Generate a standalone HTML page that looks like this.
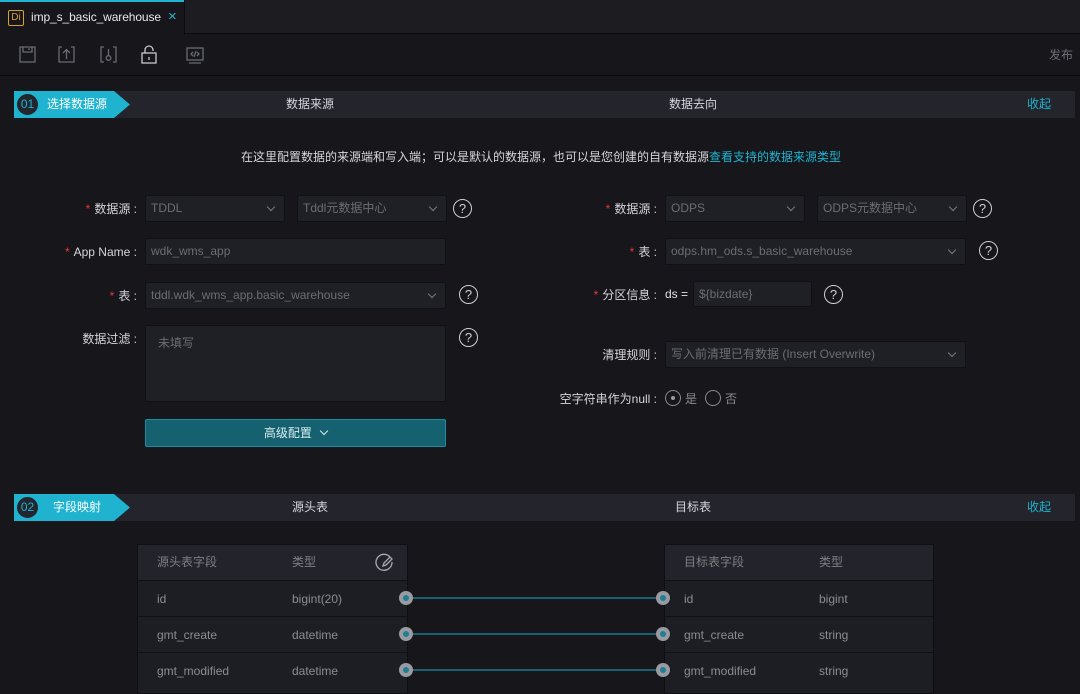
<!DOCTYPE html><html><head><meta charset="utf-8"><style>
*{box-sizing:border-box;margin:0;padding:0}
body{width:1080px;height:687px;overflow:hidden;background:#16161b;font-family:"Liberation Sans","Noto Sans CJK SC",sans-serif;color:#c8c8cc;font-size:12px;position:relative}
.a{position:absolute}
.f{position:absolute;background:#1f2026;border:1px solid #111115;border-radius:2px;color:#6c6d73;font-size:12px;line-height:25px;padding-left:5px}
.f .c{position:absolute;right:10px;top:8px;width:6px;height:6px;border-right:1.2px solid #7a7b80;border-bottom:1.2px solid #7a7b80;transform:rotate(45deg)}
.q{position:absolute;width:19px;height:19px;border:1.4px solid #d0d0d4;border-radius:50%;color:#d0d0d4;font-size:13px;text-align:center;line-height:17px}
.lb{position:absolute;text-align:right;font-size:12px;color:#d6d6da;line-height:16px}
.lb b{color:#e53935;font-weight:normal;margin-right:4px}
.band{position:absolute;left:14px;width:1061px;height:27px;background:#23242c;font-size:12px;color:#d6d6da;line-height:27px}
.pill{position:absolute;left:0;top:0;height:27px;width:116px;background:#1fb3d0;clip-path:polygon(0 0,100px 0,116px 50%,100px 100%,0 100%)}
.circ{position:absolute;left:1px;top:1px;width:25px;height:25px;border-radius:50%;background:#23262e;border:2px solid #1fb3d0;color:#1fb3d0;text-align:center;line-height:21px;font-size:12px}
.tb{position:absolute;background:#1d1e24;border:1px solid #0f0f13}
.row{position:absolute;left:0;right:0;height:36px;border-top:1px solid #111115;line-height:36px;color:#8c8d92;font-size:12px}
.dot{position:absolute;width:14px;height:14px;border-radius:50%;background:#9a9ba0}
.dot:after{content:"";position:absolute;left:4px;top:4px;width:6px;height:6px;border-radius:50%;background:#1f7f95}
.ln{position:absolute;height:2px;background:#1a5f72}
</style></head><body>
<div class="a" style="left:0;top:0;width:1080px;height:34px;background:#1c1c21;border-bottom:1px solid #0c0c0f"></div>
<div class="a" style="left:0;top:0;width:185px;height:35px;background:#16161b;border-right:1px solid #0c0c0f"></div>
<div class="a" style="left:0;top:0;width:184px;height:2px;background:#1fb3d0"></div>
<div class="a" style="left:8px;top:10px;width:16px;height:16px;border:1px solid #d8a030;border-radius:2px;color:#d8a030;font-size:10px;line-height:14px;text-align:center">Di</div>
<div class="a" style="left:31px;top:10px;font-size:12px;color:#e8e8ec;letter-spacing:-0.1px">imp_s_basic_warehouse</div>
<div class="a" style="left:168px;top:8px;font-size:15px;color:#1fb3d0">×</div>
<div class="a" style="left:0;top:75px;width:1080px;height:1px;background:#0a0a0d"></div>
<svg class="a" style="left:18px;top:45px" width="190" height="22" fill="none" stroke="#6a6b70" stroke-width="1.3">
<rect x="2" y="2" width="15" height="15"/><path d="M5 2v5h9V2M11 3v2"/>
<path d="M44 2h-3v15h15V2h-3M48.5 14V5M45 8l3.5-3.5L52 8"/>
<path d="M86 2h-3v15h3M95 2h3v15h-3"/><circle cx="90.5" cy="13" r="2.3"/><path d="M90.5 4v6.5"/>
<path d="M127 8V5a4 4 0 0 1 8 0v1" stroke="#c8c8cc"/><rect x="124" y="8" width="14" height="10" stroke="#c8c8cc"/><path d="M131 12v3" stroke="#c8c8cc"/>
<rect x="169" y="3" width="16" height="12"/><path d="M171 18h12M175 7l-2 2 2 2M179 7l2 2-2 2M178 6l-2 6"/>
</svg>
<div class="a" style="left:1049px;top:46px;color:#6e6f74;font-size:12px">发布</div>

<div class="band" style="top:91px"><div class="pill"></div><div class="circ">01</div>
<div class="a" style="left:33px;color:#fff">选择数据源</div>
<div class="a" style="left:272px">数据来源</div><div class="a" style="left:655px">数据去向</div>
<div class="a" style="left:1013px;color:#1fb3d0">收起</div></div>

<div class="a" style="left:241px;top:148px;font-size:12px;color:#d6d6da">在这里配置数据的来源端和写入端；可以是默认的数据源，也可以是您创建的自有数据源<span style="color:#1fb3d0">查看支持的数据来源类型</span></div>

<div class="lb" style="right:943px;top:201px"><b>*</b>数据源 :</div>
<div class="f" style="left:145px;top:195px;width:140px;height:27px">TDDL<i class="c"></i></div>
<div class="f" style="left:297px;top:195px;width:150px;height:27px">Tddl元数据中心<i class="c"></i></div>
<div class="q" style="left:453px;top:199px">?</div>
<div class="lb" style="right:943px;top:244px"><b>*</b>App Name :</div>
<div class="f" style="left:145px;top:238px;width:301px;height:27px">wdk_wms_app</div>
<div class="lb" style="right:943px;top:288px"><b>*</b>表 :</div>
<div class="f" style="left:145px;top:282px;width:301px;height:27px">tddl.wdk_wms_app.basic_warehouse<i class="c"></i></div>
<div class="q" style="left:459px;top:285px">?</div>
<div class="lb" style="right:943px;top:331px">数据过滤 :</div>
<div class="f" style="left:145px;top:325px;width:301px;height:77px;padding:8px 12px;line-height:18px">未填写</div>
<div class="q" style="left:459px;top:328px">?</div>
<div class="a" style="left:145px;top:419px;width:301px;height:28px;background:#15616f;border:1px solid #1a8ea3;border-radius:2px;color:#d8eef2;text-align:center;line-height:26px">高级配置 <span style="display:inline-block;width:6px;height:6px;border-right:1.5px solid #d8eef2;border-bottom:1.5px solid #d8eef2;transform:rotate(45deg);margin:0 0 3px 6px"></span></div>

<div class="lb" style="right:423px;top:201px"><b>*</b>数据源 :</div>
<div class="f" style="left:665px;top:195px;width:140px;height:27px">ODPS<i class="c"></i></div>
<div class="f" style="left:817px;top:195px;width:150px;height:27px">ODPS元数据中心<i class="c"></i></div>
<div class="q" style="left:973px;top:199px">?</div>
<div class="lb" style="right:423px;top:244px"><b>*</b>表 :</div>
<div class="f" style="left:665px;top:238px;width:301px;height:27px">odps.hm_ods.s_basic_warehouse<i class="c"></i></div>
<div class="q" style="left:979px;top:241px">?</div>
<div class="lb" style="right:423px;top:287px"><b>*</b>分区信息 :</div>
<div class="a" style="left:665px;top:287px;color:#e0e0e4;font-size:12px">ds =</div>
<div class="f" style="left:693px;top:281px;width:119px;height:26px">${bizdate}</div>
<div class="q" style="left:824px;top:285px">?</div>
<div class="lb" style="right:423px;top:347px">清理规则 :</div>
<div class="f" style="left:665px;top:341px;width:301px;height:27px">写入前清理已有数据 (Insert Overwrite)<i class="c"></i></div>
<div class="lb" style="right:423px;top:391px">空字符串作为null :</div>
<div class="a" style="left:665px;top:390px;width:16px;height:16px;border:1px solid #8a8b90;border-radius:50%"><div class="a" style="left:5px;top:5px;width:4px;height:4px;border-radius:50%;background:#9a9ba0"></div></div>
<div class="a" style="left:685px;top:390px;color:#8a8b90">是</div>
<div class="a" style="left:705px;top:390px;width:16px;height:16px;border:1px solid #8a8b90;border-radius:50%"></div>
<div class="a" style="left:725px;top:390px;color:#8a8b90">否</div>

<div class="band" style="top:494px"><div class="pill"></div><div class="circ">02</div>
<div class="a" style="left:39px;color:#fff">字段映射</div>
<div class="a" style="left:278px">源头表</div><div class="a" style="left:661px">目标表</div>
<div class="a" style="left:1013px;color:#1fb3d0">收起</div></div>

<div class="tb" style="left:137px;top:544px;width:271px;height:150px">
<div class="a" style="left:0;top:0;right:0;height:35px;background:#23242b;line-height:35px;color:#7e7f84"><span class="a" style="left:19px">源头表字段</span><span class="a" style="left:154px">类型</span>
<svg class="a" style="left:237px;top:8px" width="20" height="20" fill="none" stroke="#a8a9ae" stroke-width="1.3"><path d="M15 4A8 8 0 1 0 17 9"/><path d="M8 13l1-3 6-6 2 2-6 6z"/></svg></div>
<div class="row" style="top:35px"><span class="a" style="left:19px">id</span><span class="a" style="left:154px">bigint(20)</span></div>
<div class="row" style="top:71px"><span class="a" style="left:19px">gmt_create</span><span class="a" style="left:154px">datetime</span></div>
<div class="row" style="top:107px"><span class="a" style="left:19px">gmt_modified</span><span class="a" style="left:154px">datetime</span></div>
</div>
<div class="tb" style="left:664px;top:544px;width:270px;height:150px">
<div class="a" style="left:0;top:0;right:0;height:35px;background:#23242b;line-height:35px;color:#7e7f84"><span class="a" style="left:19px">目标表字段</span><span class="a" style="left:154px">类型</span></div>
<div class="row" style="top:35px"><span class="a" style="left:19px">id</span><span class="a" style="left:154px">bigint</span></div>
<div class="row" style="top:71px"><span class="a" style="left:19px">gmt_create</span><span class="a" style="left:154px">string</span></div>
<div class="row" style="top:107px"><span class="a" style="left:19px">gmt_modified</span><span class="a" style="left:154px">string</span></div>
</div>
<div class="ln" style="left:410px;top:597px;width:250px"></div>
<div class="ln" style="left:410px;top:633px;width:250px"></div>
<div class="ln" style="left:410px;top:669px;width:250px"></div>
<div class="dot" style="left:399px;top:591px"></div><div class="dot" style="left:656px;top:591px"></div>
<div class="dot" style="left:399px;top:627px"></div><div class="dot" style="left:656px;top:627px"></div>
<div class="dot" style="left:399px;top:663px"></div><div class="dot" style="left:656px;top:663px"></div>
</body></html>
